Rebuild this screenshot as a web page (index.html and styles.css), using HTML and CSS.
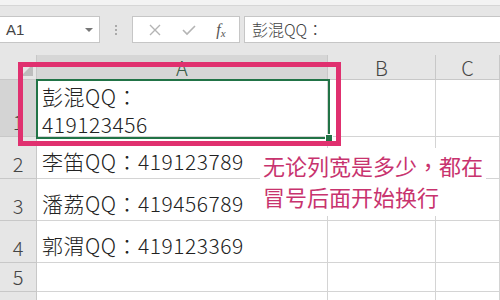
FILE: index.html
```html
<!doctype html>
<html>
  <head>
    <title>换行示例</title>
    <link rel="stylesheet" href="styles.css">
  </head>
  <body>
    <div class="top-strip"></div>

    <!-- 编辑栏 -->
    <div class="formula-bar">
      <div class="name-box">
        <span>A1</span>
        <span class="caret"></span>
      </div>
      <div class="grip"><i></i><i></i><i></i></div>
      <div class="fx-buttons">
        <svg width="14" height="14" viewBox="0 0 14 14"><path d="M2 2 L12 12 M12 2 L2 12" stroke="#b4b4b4" stroke-width="1.4" fill="none"/></svg>
        <svg width="16" height="14" viewBox="0 0 16 14"><path d="M2 7 L6 11 L14 3" stroke="#b4b4b4" stroke-width="1.6" fill="none"/></svg>
        <span class="fx">f<sub>x</sub></span>
      </div>
      <div class="formula-input">彭混QQ<span class="colon">：</span></div>
    </div>

    <!-- 工作表 -->
    <div class="sheet">
      <div class="corner"><span class="select-all"></span></div>
      <div class="col-head active">A</div>
      <div class="col-head">B</div>
      <div class="col-head">C</div>

      <div class="row-head active">1</div>
      <div class="cell wrap">彭混QQ<span class="colon">：</span><br>419123456</div>
      <div class="cell"></div>
      <div class="cell"></div>

      <div class="row-head">2</div>
      <div class="cell">李笛QQ<span class="colon">：</span>419123789</div>
      <div class="cell"></div>
      <div class="cell"></div>

      <div class="row-head">3</div>
      <div class="cell">潘荔QQ<span class="colon">：</span>419456789</div>
      <div class="cell"></div>
      <div class="cell"></div>

      <div class="row-head">4</div>
      <div class="cell">郭渭QQ<span class="colon">：</span>419123369</div>
      <div class="cell"></div>
      <div class="cell"></div>

      <div class="row-head">5</div>
      <div class="cell"></div>
      <div class="cell"></div>
      <div class="cell"></div>

      <div class="row-head"></div>
      <div class="cell"></div>
      <div class="cell"></div>
      <div class="cell"></div>

      <!-- 选中框和标注 -->
      <div class="selection"><span class="handle"></span></div>
      <div class="highlight"></div>
      <div class="note">无论列宽是多少<span class="colon">，</span>都在<br>冒号后面开始换行</div>
    </div>
  </body>
</html>
```

FILE: styles.css
```css
/* 通用 */
body {
  margin: 0;
  padding: 0;
  width: 500px;
  height: 300px;
  overflow: hidden;
  background: #fff;
  font-family: "Noto Sans CJK SC", "Liberation Sans", sans-serif;
  color: #222;
}

/* 全角标点居中 */
.colon {
  font-family: "Noto Sans CJK TC", sans-serif;
}

.top-strip {
  height: 5px;
  background: #f3f3f3;
  border-bottom: 1px solid #d6d6d6;
}

/* 编辑栏 */
.formula-bar {
  display: flex;
  align-items: center;
  height: 49px;
  padding-bottom: 2px;
  box-sizing: border-box;
  background: #e6e6e6;
}

.name-box {
  display: flex;
  align-items: center;
  justify-content: space-between;
  width: 100px;
  height: 27px;
  padding: 0 6px 0 6px;
  box-sizing: border-box;
  background: #fff;
  border: 1px solid #c6c6c6;
  border-left: none;
  font-family: "Liberation Sans", sans-serif;
  font-size: 15px;
  color: #444;
}

.caret {
  width: 0;
  height: 0;
  border-left: 4px solid transparent;
  border-right: 4px solid transparent;
  border-top: 4px solid #777;
}

.grip {
  display: flex;
  flex-direction: column;
  gap: 2px;
  width: 32px;
  align-items: center;
}

.grip i {
  width: 2px;
  height: 2px;
  background: #aaa;
}

.fx-buttons {
  display: flex;
  align-items: center;
  justify-content: space-around;
  width: 108px;
  height: 27px;
  box-sizing: border-box;
  padding: 0 4px 0 6px;
  background: #fff;
  border: 1px solid #c6c6c6;
}

.fx {
  font-family: "Liberation Serif", serif;
  font-style: italic;
  font-size: 16px;
  color: #555;
}

.fx sub {
  font-size: 11px;
  vertical-align: -2px;
}

.formula-input {
  flex: 1;
  height: 27px;
  margin-left: 4px;
  padding-left: 7px;
  box-sizing: border-box;
  background: #fff;
  border: 1px solid #c6c6c6;
  border-right: none;
  font-size: 16px;
  font-weight: 300;
  line-height: 25px;
  color: #444;
}

/* 工作表 */
.sheet {
  position: relative;
  display: grid;
  grid-template-columns: 37px 291px 108px 64px;
  grid-template-rows: 25px 57px 42px 42px 42px 29px 20px;
}

.corner {
  position: relative;
  background: #e6e6e6;
  border-right: 1px solid #c8c8c8;
  border-bottom: 1px solid #c8c8c8;
}

.select-all {
  position: absolute;
  right: 3px;
  bottom: 3px;
  width: 0;
  height: 0;
  border-left: 12px solid transparent;
  border-bottom: 12px solid #bdbdbd;
}

.col-head {
  display: flex;
  align-items: center;
  justify-content: center;
  background: #e6e6e6;
  border-right: 1px solid #c8c8c8;
  border-bottom: 1px solid #c8c8c8;
  font-size: 20px;
  font-weight: 300;
  color: #444;
}

.col-head.active {
  background: #d6d6d6;
  color: #3a5e48;
}

.row-head {
  display: flex;
  align-items: flex-end;
  justify-content: center;
  padding-bottom: 1px;
  background: #e6e6e6;
  border-right: 1px solid #c8c8c8;
  border-bottom: 1px solid #c8c8c8;
  font-size: 20px;
  font-weight: 300;
  line-height: 26px;
  color: #444;
}

.row-head.active {
  background: #d4d4d4;
}

.cell {
  display: flex;
  align-items: flex-end;
  padding: 0 0 3px 5px;
  white-space: nowrap;
  border-right: 1px solid #d4d4d4;
  border-bottom: 1px solid #d4d4d4;
  font-size: 21px;
  font-weight: 300;
  letter-spacing: 0.5px;
  line-height: 28px;
}

.cell.wrap {
  display: block;
  padding-top: 2px;
}

.selection {
  position: absolute;
  left: 36px;
  top: 24px;
  width: 290px;
  height: 56px;
  border: 2px solid #217346;
}

.handle {
  position: absolute;
  right: -5px;
  bottom: -5px;
  width: 6px;
  height: 6px;
  background: #217346;
  border: 1px solid #fff;
}

.highlight {
  position: absolute;
  left: 18px;
  top: 7px;
  width: 313px;
  height: 74px;
  border: 5px solid #e0306f;
}

.note {
  position: absolute;
  left: 260px;
  top: 93px;
  padding: 2px 3px 4px 3px;
  background: #fff;
  font-size: 22px;
  line-height: 31px;
  color: #c8336e;
}
```
